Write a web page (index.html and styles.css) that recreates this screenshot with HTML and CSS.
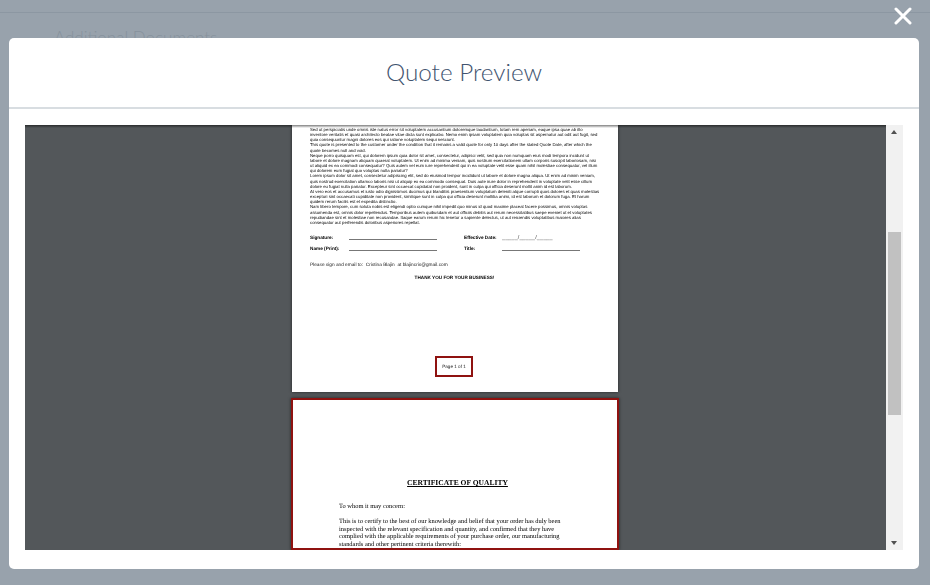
FILE: index.html
```html
<!DOCTYPE html>
<html lang="en">
<head>
    <meta charset="UTF-8">
    <meta name="viewport" content="width=device-width, initial-scale=1.0">
    <title>Quote Preview</title>
    <link rel="stylesheet" href="styles.css">
</head>
<body>

    <!-- Page behind the overlay -->
    <div class="backdrop">
        <div class="top-bar"></div>
        <h3 class="section-title">Additional Documents</h3>
    </div>

    <button class="close-btn" aria-label="Close">
        <svg width="18" height="18" viewBox="0 0 18 18">
            <path d="M2 2L16 16M16 2L2 16" stroke="#fff" stroke-width="3" stroke-linecap="round"/>
        </svg>
    </button>

    <div class="modal">
        <div class="modal-header">
            <h2>Quote Preview</h2>
        </div>

        <div class="modal-body">
            <div class="viewer">
                <div class="pages">

                    <!-- Page 1 -->
                    <div class="page page-one">
                        <div class="doc-text">
                            <p class="lorem">Sed ut perspiciatis unde omnis iste natus error sit voluptatem accusantium doloremque laudantium, totam rem aperiam, eaque ipsa quae ab illo<br>inventore veritatis et quasi architecto beatae vitae dicta sunt explicabo. Nemo enim ipsam voluptatem quia voluptas sit aspernatur aut odit aut fugit, sed<br>quia consequuntur magni dolores eos qui ratione voluptatem sequi nesciunt.</p>
                            <p class="lorem">This quote is presented to the customer under the condition that it remains a valid quote for only 10 days after the stated Quote Date, after which the<br>quote becomes null and void.</p>
                            <p class="lorem">Neque porro quisquam est, qui dolorem ipsum quia dolor sit amet, consectetur, adipisci velit, sed quia non numquam eius modi tempora incidunt ut<br>labore et dolore magnam aliquam quaerat voluptatem. Ut enim ad minima veniam, quis nostrum exercitationem ullam corporis suscipit laboriosam, nisi<br>ut aliquid ex ea commodi consequatur? Quis autem vel eum iure reprehenderit qui in ea voluptate velit esse quam nihil molestiae consequatur, vel illum<br>qui dolorem eum fugiat quo voluptas nulla pariatur?</p>
                            <p class="lorem">Lorem ipsum dolor sit amet, consectetur adipiscing elit, sed do eiusmod tempor incididunt ut labore et dolore magna aliqua. Ut enim ad minim veniam,<br>quis nostrud exercitation ullamco laboris nisi ut aliquip ex ea commodo consequat. Duis aute irure dolor in reprehenderit in voluptate velit esse cillum<br>dolore eu fugiat nulla pariatur. Excepteur sint occaecat cupidatat non proident, sunt in culpa qui officia deserunt mollit anim id est laborum.</p>
                            <p class="lorem">At vero eos et accusamus et iusto odio dignissimos ducimus qui blanditiis praesentium voluptatum deleniti atque corrupti quos dolores et quas molestias<br>excepturi sint occaecati cupiditate non provident, similique sunt in culpa qui officia deserunt mollitia animi, id est laborum et dolorum fuga. Et harum<br>quidem rerum facilis est et expedita distinctio.</p>
                            <p class="lorem">Nam libero tempore, cum soluta nobis est eligendi optio cumque nihil impedit quo minus id quod maxime placeat facere possimus, omnis voluptas<br>assumenda est, omnis dolor repellendus. Temporibus autem quibusdam et aut officiis debitis aut rerum necessitatibus saepe eveniet ut et voluptates<br>repudiandae sint et molestiae non recusandae. Itaque earum rerum hic tenetur a sapiente delectus, ut aut reiciendis voluptatibus maiores alias<br>consequatur aut perferendis doloribus asperiores repellat.</p>

                            <div class="sign-grid">
                                <span class="sign-label">Signature:</span>
                                <span class="sign-line"></span>
                                <span class="sign-label">Effective Date:</span>
                                <span class="sign-date">_____/_____/_____</span>
                                <span class="sign-label">Name (Print):</span>
                                <span class="sign-line"></span>
                                <span class="sign-label">Title:</span>
                                <span class="sign-line sign-line-title"></span>
                            </div>

                            <p class="sign-note">Please sign and email to:&nbsp; Cristina Blajin&nbsp; at blajincris@gmail.com</p>
                            <p class="thanks">THANK YOU FOR YOUR BUSINESS!</p>
                        </div>

                        <div class="page-number"><span class="doc-text">Page 1 of 1</span></div>
                    </div>

                    <!-- Page 2 -->
                    <div class="page page-two">
                        <div class="doc-text">
                            <h4 class="cert-title">CERTIFICATE OF QUALITY</h4>
                            <p class="cert-text cert-greeting">To whom it may concern:</p>
                            <p class="cert-text">This is to certify to the best of our knowledge and belief that your order has duly been<br>inspected with the relevant specification and quantity, and confirmed that they have<br>complied with the applicable requirements of your purchase order, our manufacturing<br>standards and other pertinent criteria therewith:</p>
                        </div>
                    </div>

                </div>
            </div>

            <div class="scrollbar">
                <span class="arrow arrow-up"></span>
                <div class="track">
                    <div class="thumb"></div>
                </div>
                <span class="arrow arrow-down"></span>
            </div>
        </div>
    </div>

</body>
</html>
```

FILE: styles.css
```css
* {
    box-sizing: border-box;
}

html, body {
    height: 100%;
}

body {
    margin: 0;
    background-color: #98a2ac;
    font-family: Lato, Arial, sans-serif;
    overflow: hidden;
}

.backdrop {
    height: 100%;
}

.top-bar {
    height: 13px;
    border-bottom: 1px solid #8c97a2;
}

.section-title {
    margin: 15px 0 0 54px;
    font-size: 17px;
    line-height: 20px;
    font-weight: 300;
    color: #87929d;
}

.close-btn {
    position: absolute;
    top: 7px;
    right: 18px;
    width: 18px;
    height: 18px;
    padding: 0;
    border: none;
    background: none;
    cursor: pointer;
}

.close-btn svg {
    display: block;
}

.modal {
    position: absolute;
    top: 38px;
    left: 9px;
    width: 910px;
    height: 531px;
    background: white;
    border-radius: 5px;
}

.modal-header {
    height: 71px;
    border-bottom: 2px solid #d8dde1;
}

.modal-header h2 {
    margin: 0;
    padding-top: 19px;
    text-align: center;
    font-size: 24.3px;
    line-height: 30px;
    font-weight: 300;
    color: #42546f;
}

.modal-body {
    display: flex;
    margin: 16px 16px 0;
    height: 425px;
}

.viewer {
    flex: 1;
    position: relative;
    background-color: #53575a;
    overflow: hidden;
}

/* toolbar shadow falls over the pages too */
.viewer::after {
    content: "";
    position: absolute;
    top: 0;
    left: 0;
    right: 0;
    height: 3px;
    background: linear-gradient(rgba(0, 0, 0, 0.5), rgba(0, 0, 0, 0));
}

.pages {
    display: flex;
    flex-direction: column;
    align-items: center;
    gap: 6px;
    padding-right: 1px;
}

.page {
    width: 326px;
    background: white;
    box-shadow: 0 0 3px rgba(0, 0, 0, 0.6);
    flex-shrink: 0;
}

/* the pdf is a scaled image in the original, so its small text is soft */
.doc-text {
    filter: blur(0.35px);
    text-rendering: geometricPrecision;
    white-space: nowrap;
}

.page-one {
    height: 267px;
    padding-top: 2px;
    font-family: "Liberation Sans", Arial, sans-serif;
    color: #000;
}

.lorem {
    margin: 0 0 0 18px;
    font-size: 4.3px;
    line-height: 5.15px;
}

.sign-grid {
    display: grid;
    grid-template-columns: 39px 115px 38px 1fr;
    row-gap: 5px;
    margin: 10px 0 0 18px;
    font-size: 4.7px;
    line-height: 6px;
}

.sign-label {
    font-weight: bold;
}

.sign-line {
    width: 88px;
    height: 5px;
    border-bottom: 1px solid #777;
}

.sign-line-title {
    width: 78px;
}

.sign-date {
    font-size: 5.5px;
    letter-spacing: 0.1px;
    color: #444;
}

.sign-note {
    margin: 11px 0 0 18px;
    font-size: 4.75px;
    line-height: 6px;
    color: #222;
}

.thanks {
    margin: 6px 0 0 -1px;
    font-size: 4.65px;
    line-height: 6px;
    font-weight: bold;
    text-align: center;
}

.page-number {
    width: 38px;
    height: 21px;
    margin: 75px 0 0 143px;
    border: 2px solid #8f1210;
    font-size: 4.6px;
    line-height: 17px;
    text-align: center;
    color: #222;
}

.page-number .doc-text {
    display: block;
}

.page-two {
    width: 328px;
    height: 152px;
    border: 2.5px solid #8f1210;
    font-family: "Liberation Serif", "Times New Roman", serif;
    color: #000;
}

.cert-title {
    margin: 78px 0 0;
    padding-left: 5px;
    font-size: 7.55px;
    line-height: 10px;
    font-weight: bold;
    text-align: center;
    text-decoration: underline;
}

.cert-text {
    margin: 0 0 0 46px;
    font-size: 6.45px;
    line-height: 7.75px;
}

.cert-greeting {
    margin-top: 15px;
    margin-bottom: 7px;
}

.scrollbar {
    display: flex;
    flex-direction: column;
    width: 17px;
    background-color: #f1f1f1;
}

.arrow {
    display: block;
    width: 17px;
    height: 17px;
    flex-shrink: 0;
    position: relative;
}

.arrow::after {
    content: "";
    position: absolute;
    left: 5px;
    width: 0;
    height: 0;
    border-left: 3.5px solid transparent;
    border-right: 3.5px solid transparent;
}

.arrow-up::after {
    top: 5px;
    border-bottom: 4px solid #505050;
}

.arrow-down::after {
    bottom: 5px;
    border-top: 4px solid #505050;
}

.track {
    flex: 1;
    padding-top: 90px;
}

.thumb {
    width: 13px;
    height: 183px;
    margin: 0 auto;
    background-color: #c1c1c1;
}
```
